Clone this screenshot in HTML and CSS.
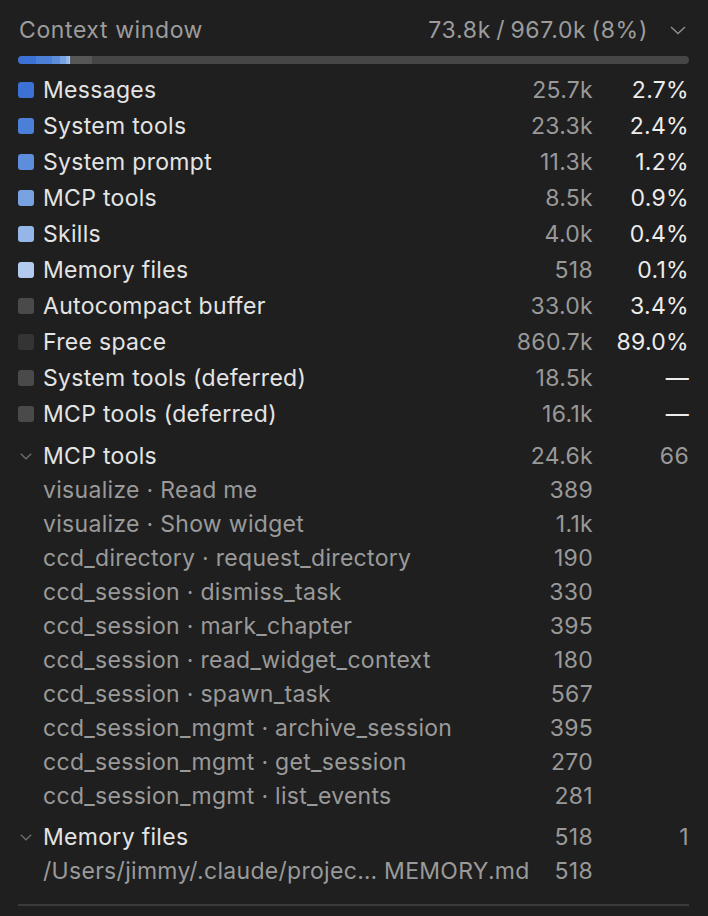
FILE: index.html
```html
<!DOCTYPE html>
<html lang="en">
<head>
<meta charset="utf-8">
<title>Context window</title>
<link rel="stylesheet" href="styles.css">
</head>
<body>
<div class="panel">
  <div class="header">
    <span class="title">Context window</span>
    <span class="total">73.8k / 967.0k (8%)</span>
    <svg class="chev" width="16" height="9" viewBox="0 0 16 9"><polyline points="1,1 8,7.5 15,1" fill="none" stroke="#8e8e8e" stroke-width="1.5"/></svg>
  </div>
  <div class="bar">
    <span class="seg c1" style="width:2.7%"></span>
    <span class="seg c2" style="width:2.4%"></span>
    <span class="seg c3" style="width:1.2%"></span>
    <span class="seg c4" style="width:0.9%"></span>
    <span class="seg c5" style="width:0.4%"></span>
    <span class="seg c6" style="width:0.1%"></span>
    <span class="seg auto" style="width:3.4%"></span>
  </div>
  <div class="rows">
    <div class="row"><span class="label"><i class="sw c1"></i>Messages</span><span class="val">25.7k</span><span class="pct">2.7%</span></div>
    <div class="row"><span class="label"><i class="sw c2"></i>System tools</span><span class="val">23.3k</span><span class="pct">2.4%</span></div>
    <div class="row"><span class="label"><i class="sw c3"></i>System prompt</span><span class="val">11.3k</span><span class="pct">1.2%</span></div>
    <div class="row"><span class="label"><i class="sw c4"></i>MCP tools</span><span class="val">8.5k</span><span class="pct">0.9%</span></div>
    <div class="row"><span class="label"><i class="sw c5"></i>Skills</span><span class="val">4.0k</span><span class="pct">0.4%</span></div>
    <div class="row"><span class="label"><i class="sw c6"></i>Memory files</span><span class="val">518</span><span class="pct">0.1%</span></div>
    <div class="row"><span class="label"><i class="sw g1"></i>Autocompact buffer</span><span class="val">33.0k</span><span class="pct">3.4%</span></div>
    <div class="row"><span class="label"><i class="sw g2"></i>Free space</span><span class="val">860.7k</span><span class="pct">89.0%</span></div>
    <div class="row"><span class="label"><i class="sw g1"></i>System tools (deferred)</span><span class="val">18.5k</span><span class="pct">—</span></div>
    <div class="row"><span class="label"><i class="sw g1"></i>MCP tools (deferred)</span><span class="val">16.1k</span><span class="pct">—</span></div>
  </div>

  <div class="section">
    <div class="srow shead"><span class="label"><svg class="schev" width="12" height="7" viewBox="0 0 12 7"><polyline points="0.8,0.8 6,5.8 11.2,0.8" fill="none" stroke="#707070" stroke-width="1.2"/></svg>MCP tools</span><span class="val">24.6k</span><span class="cnt">66</span></div>
    <div class="srow sub"><span class="label">visualize · Read me</span><span class="val">389</span><span class="cnt"></span></div>
    <div class="srow sub"><span class="label">visualize · Show widget</span><span class="val">1.1k</span><span class="cnt"></span></div>
    <div class="srow sub"><span class="label">ccd_directory · request_directory</span><span class="val">190</span><span class="cnt"></span></div>
    <div class="srow sub"><span class="label">ccd_session · dismiss_task</span><span class="val">330</span><span class="cnt"></span></div>
    <div class="srow sub"><span class="label">ccd_session · mark_chapter</span><span class="val">395</span><span class="cnt"></span></div>
    <div class="srow sub"><span class="label">ccd_session · read_widget_context</span><span class="val">180</span><span class="cnt"></span></div>
    <div class="srow sub"><span class="label">ccd_session · spawn_task</span><span class="val">567</span><span class="cnt"></span></div>
    <div class="srow sub"><span class="label">ccd_session_mgmt · archive_session</span><span class="val">395</span><span class="cnt"></span></div>
    <div class="srow sub"><span class="label">ccd_session_mgmt · get_session</span><span class="val">270</span><span class="cnt"></span></div>
    <div class="srow sub"><span class="label">ccd_session_mgmt · list_events</span><span class="val">281</span><span class="cnt"></span></div>
  </div>

  <div class="section">
    <div class="srow shead"><span class="label"><svg class="schev" width="12" height="7" viewBox="0 0 12 7"><polyline points="0.8,0.8 6,5.8 11.2,0.8" fill="none" stroke="#707070" stroke-width="1.2"/></svg>Memory files</span><span class="val">518</span><span class="cnt">1</span></div>
    <div class="srow sub"><span class="label file">/Users/jimmy/.claude/projec… MEMORY.md</span><span class="val">518</span><span class="cnt"></span></div>
  </div>

  <div class="divider"></div>
</div>
</body>
</html>
```

FILE: styles.css
```css
html, body {
  margin: 0;
  padding: 0;
  background: #1f1f1f;
}
body {
  font-family: Inter, "Noto Sans", sans-serif;
  font-size: 23px;
  letter-spacing: 0.3px;
  color: #e4e4e4;
  width: 708px;
  height: 916px;
  overflow: hidden;
}
.panel {
  padding: 12px 19px 0 18px;
}
.header {
  display: flex;
  align-items: center;
  height: 36px;
}
.title {
  color: #9c9c9c;
  padding-left: 1px;
  flex: 1;
  letter-spacing: 0.6px;
}
.total {
  color: #9c9c9c;
  letter-spacing: 0.7px;
  word-spacing: -2px;
}
.chev {
  margin-left: 22px;
  margin-right: 3px;
}
.bar {
  margin-top: 8px;
  height: 8px;
  border-radius: 4px;
  background: #464646;
  display: flex;
  overflow: hidden;
}
.seg {
  display: block;
  height: 100%;
}
.c1 { background: #3c71d5; }
.c2 { background: #4b7fd8; }
.c3 { background: #5d8edc; }
.c4 { background: #79a2e2; }
.c5 { background: #95b6e9; }
.c6 { background: #b3cbef; }
.auto { background: #575757; }
.g1 { background: #4a4a4a; }
.g2 { background: #343434; }

.rows {
  margin-top: 8px;
}
.row, .srow {
  display: grid;
  grid-template-columns: minmax(0, 1fr) 96px 96px;
  align-items: center;
  white-space: nowrap;
}
.row {
  height: 36px;
}
.srow {
  height: 34px;
}
.label {
  display: flex;
  align-items: center;
  color: #e4e4e4;
  min-width: 0;
}
.sw {
  display: inline-block;
  width: 16px;
  height: 16px;
  border-radius: 3px;
  margin-right: 9px;
  flex: none;
}
.val {
  text-align: right;
  color: #999999;
}
.pct {
  text-align: right;
  color: #ececec;
}
.cnt {
  text-align: right;
  color: #999999;
}
.section {
  margin-top: 7px;
}
.schev {
  margin-left: 2px;
  margin-right: 11px;
  flex: none;
}
.sub .label {
  color: #9a9a9a;
  padding-left: 25px;
}
.file {
  overflow: visible;
}
.divider {
  margin-top: 16px;
  height: 2px;
  background: #3a3a3a;
}
```
